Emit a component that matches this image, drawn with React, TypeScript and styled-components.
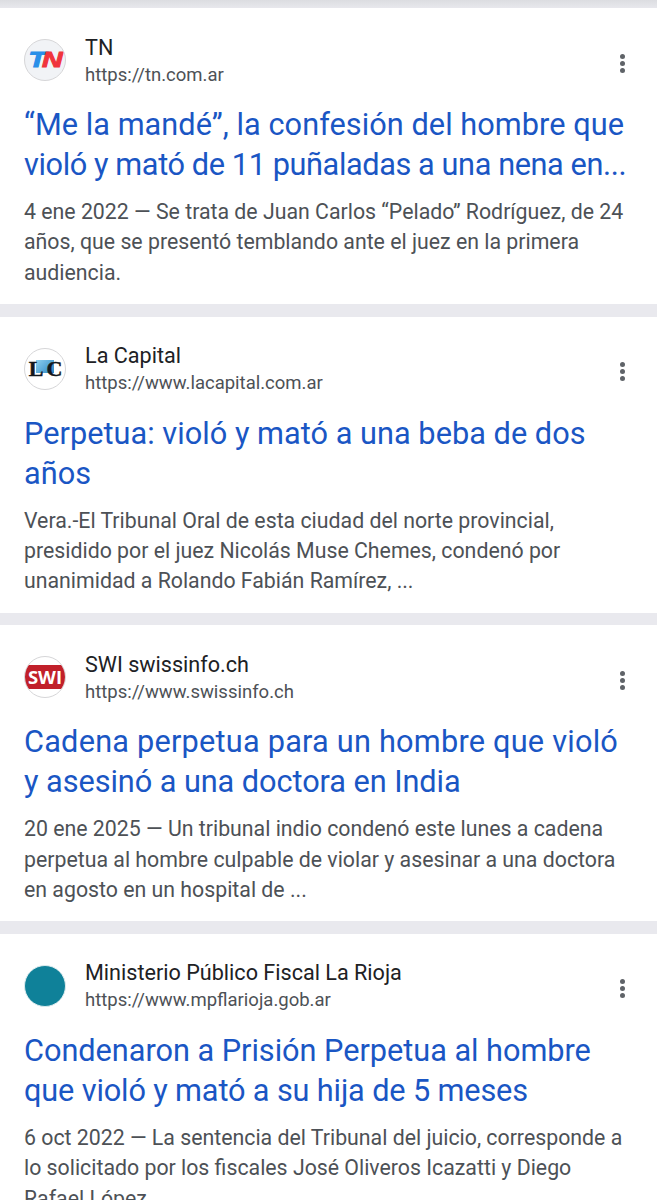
import { FC, ReactNode } from "react";
import styled, { createGlobalStyle } from "styled-components";

const GlobalStyle = createGlobalStyle`
    html, body {
        margin: 0;
        padding: 0;
        background: #ffffff;
    }
`;

const Page = styled.div`
    width: 657px;
    height: 1200px;
    overflow: hidden;
    background: #ffffff;
    font-family: Roboto, "Liberation Sans", sans-serif;
`;

const TopShade = styled.div`
    height: 8px;
    background: linear-gradient(#dcdde1, #e8e8ed);
`;

const Divider = styled.div`
    height: 12.67px;
    background: #e9e9ee;
`;

const Card = styled.div`
    height: 296px;
    box-sizing: border-box;
    padding: 24px 0 0 24px;
`;

const Header = styled.div`
    display: flex;
    align-items: center;
    height: 54px;
`;

type Tone = "plain" | "tint" | "teal";

const toneBackground = {
    plain: "#ffffff",
    tint: "#f1f3f6",
    teal: "#0f8199",
};

const Favicon = styled.div<{ $tone: Tone }>`
    flex: none;
    width: 42px;
    height: 42px;
    box-sizing: border-box;
    border-radius: 50%;
    border: 1px solid ${({ $tone }) => ($tone === "teal" ? "#dcebee" : "#d6d6d8")};
    background: ${({ $tone }) => toneBackground[$tone]};
    display: flex;
    align-items: center;
    justify-content: center;
    overflow: hidden;
    margin: 2px 19px 0 0;
`;

const SwiBand = styled.div`
    width: 100%;
    height: 24px;
    background: #c1202a;
    color: #ffffff;
    font-family: "Open Sans", sans-serif;
    font-size: 18.5px;
    font-weight: 700;
    line-height: 24px;
    text-align: center;
`;

const TnMark = styled.div`
    display: flex;
    font-family: "Liberation Sans", sans-serif;
    font-size: 22px;
    font-weight: 700;
    font-style: italic;
    line-height: 20px;
    letter-spacing: -3px;
    transform: scaleX(1.3);
    margin-left: -3px;
    -webkit-text-stroke: 1px currentColor;
`;

const MarkLetter = styled.span<{ $color: string }>`
    color: ${({ $color }) => $color};
`;

const LcMark = styled.div`
    display: flex;
    align-items: center;
    font-family: "Liberation Serif", serif;
    font-size: 22px;
    font-weight: 700;
    line-height: 20px;
    letter-spacing: -1px;
    color: #14181c;
    -webkit-text-stroke: 0.5px currentColor;
    background: linear-gradient(135deg, #8fd0ee, #2b86c4) 50% 20% / 18px 13px no-repeat;
`;

const LcGap = styled.span`
    width: 4px;
`;

const Source = styled.div`
    flex: 1;
    display: flex;
    flex-direction: column;
    margin-top: 3px;
`;

const SiteName = styled.div`
    color: #202124;
    font-size: 21.6px;
    line-height: 28px;
`;

const SiteUrl = styled.div`
    color: #4d5156;
    font-size: 18.5px;
    line-height: 26px;
`;

const MoreButton = styled.div`
    flex: none;
    width: 5px;
    display: flex;
    flex-direction: column;
    gap: 2px;
    margin-right: 32px;
    margin-top: 8px;
`;

const Dot = styled.span`
    display: block;
    width: 5px;
    height: 5px;
    border-radius: 50%;
    background: #5f6368;
`;

const Title = styled.div`
    margin-top: 19px;
    color: #1a56c4;
    font-size: 30.7px;
    line-height: 40px;
`;

const TitleLine = styled.div<{ $tracking: number }>`
    white-space: nowrap;
    letter-spacing: ${({ $tracking }) => $tracking}px;
`;

const Snippet = styled.div`
    margin-top: 12px;
    color: #4d5156;
    font-size: 21.3px;
    line-height: 30.3px;
`;

const Line = styled.div`
    white-space: nowrap;
`;

type Result = {
    id: number;
    logo: ReactNode;
    logoTone: Tone;
    site: string;
    url: string;
    title: { text: string; tracking: number }[];
    snippet: string[];
};

const results: Result[] = [
    {
        id: 1,
        logo: (
            <TnMark>
                <MarkLetter $color="#2a8fe8">T</MarkLetter>
                <MarkLetter $color="#f0343c">N</MarkLetter>
            </TnMark>
        ),
        logoTone: "tint",
        site: "TN",
        url: "https://tn.com.ar",
        title: [
            { text: "“Me la mandé”, la confesión del hombre que", tracking: 0.05 },
            { text: "violó y mató de 11 puñaladas a una nena en...", tracking: -0.4 },
        ],
        snippet: [
            "4 ene 2022 — Se trata de Juan Carlos “Pelado” Rodríguez, de 24",
            "años, que se presentó temblando ante el juez en la primera",
            "audiencia.",
        ],
    },
    {
        id: 2,
        logo: (
            <LcMark>
                L<LcGap />C
            </LcMark>
        ),
        logoTone: "plain",
        site: "La Capital",
        url: "https://www.lacapital.com.ar",
        title: [
            { text: "Perpetua: violó y mató a una beba de dos", tracking: 0.03 },
            { text: "años", tracking: 0 },
        ],
        snippet: [
            "Vera.-El Tribunal Oral de esta ciudad del norte provincial,",
            "presidido por el juez Nicolás Muse Chemes, condenó por",
            "unanimidad a Rolando Fabián Ramírez, ...",
        ],
    },
    {
        id: 3,
        logo: <SwiBand>SWI</SwiBand>,
        logoTone: "plain",
        site: "SWI swissinfo.ch",
        url: "https://www.swissinfo.ch",
        title: [
            { text: "Cadena perpetua para un hombre que violó", tracking: 0.22 },
            { text: "y asesinó a una doctora en India", tracking: -0.06 },
        ],
        snippet: [
            "20 ene 2025 — Un tribunal indio condenó este lunes a cadena",
            "perpetua al hombre culpable de violar y asesinar a una doctora",
            "en agosto en un hospital de ...",
        ],
    },
    {
        id: 4,
        logo: null,
        logoTone: "teal",
        site: "Ministerio Público Fiscal La Rioja",
        url: "https://www.mpflarioja.gob.ar",
        title: [
            { text: "Condenaron a Prisión Perpetua al hombre", tracking: -0.03 },
            { text: "que violó y mató a su hija de 5 meses", tracking: -0.14 },
        ],
        snippet: [
            "6 oct 2022 — La sentencia del Tribunal del juicio, corresponde a",
            "lo solicitado por los fiscales José Oliveros Icazatti y Diego",
            "Rafael López ...",
        ],
    },
];

const App: FC = () => {
    return (
        <Page>
            <GlobalStyle />
            <TopShade />
            {results.map((result, index) => (
                <div key={result.id}>
                    {index > 0 && <Divider />}
                    <Card>
                        <Header>
                            <Favicon $tone={result.logoTone}>{result.logo}</Favicon>
                            <Source>
                                <SiteName>{result.site}</SiteName>
                                <SiteUrl>{result.url}</SiteUrl>
                            </Source>
                            <MoreButton>
                                <Dot />
                                <Dot />
                                <Dot />
                            </MoreButton>
                        </Header>
                        <Title>
                            {result.title.map((line) => (
                                <TitleLine key={line.text} $tracking={line.tracking}>
                                    {line.text}
                                </TitleLine>
                            ))}
                        </Title>
                        <Snippet>
                            {result.snippet.map((line) => (
                                <Line key={line}>{line}</Line>
                            ))}
                        </Snippet>
                    </Card>
                </div>
            ))}
        </Page>
    );
};

export default App;
